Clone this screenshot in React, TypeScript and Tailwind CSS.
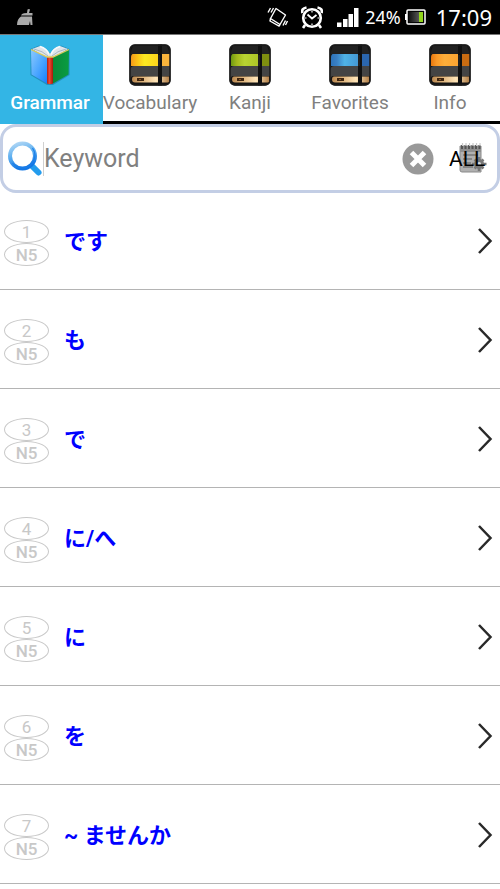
import { useState } from "react";

const tabs = [
  { label: "Grammar" },
  { label: "Vocabulary", id: "yellow", left: "#f59a1c", main: "#fdea22", end: "#fbc016", right: "#f9b43c" },
  { label: "Kanji", id: "green", left: "#6f9a12", main: "#b9d432", end: "#a3b81c", right: "#7f8f10" },
  { label: "Favorites", id: "blue", left: "#2d74bb", main: "#4fb3e6", end: "#3a80c4", right: "#2b66ae" },
  { label: "Info", id: "orange", left: "#e8780f", main: "#fdae3a", end: "#fa9a28", right: "#c96c12" },
];

const entries = ["です", "も", "で", "に/へ", "に", "を", "~ ませんか"];

function OpenBook() {
  return (
    <svg viewBox="0 0 42 42" className="h-[42px] w-[42px]" aria-hidden="true">
      <defs>
        <linearGradient id="cover-blue" x1="0" y1="0" x2="1" y2="1">
          <stop offset="0" stopColor="#8cc9fd" />
          <stop offset="0.5" stopColor="#4fa8ff" />
          <stop offset="1" stopColor="#1480ff" />
        </linearGradient>
        <linearGradient id="cover-green" x1="0" y1="0" x2="1" y2="0">
          <stop offset="0" stopColor="#0a8a37" />
          <stop offset="1" stopColor="#0a9c42" />
        </linearGradient>
        <linearGradient id="spine" x1="0" y1="0" x2="1" y2="0">
          <stop offset="0" stopColor="#b51f10" />
          <stop offset="0.4" stopColor="#ee4a34" />
          <stop offset="1" stopColor="#a91808" />
        </linearGradient>
      </defs>
      <path d="M1.5 5 10 1.500l11 8 11-8L40.500 5v26L24 41h-6L1.500 31Z" fill="#126a94" opacity=".5" />
      <path d="M3 5 11 2q7 2 10 8 3-6 10-8l8 3-15 9h-6Z" fill="#dfe4ea" />
      <path d="M11 2.500q7 2 9 8M31 2.500q-7 2-9 8" stroke="#f8f9fb" strokeWidth="1.500" fill="none" />
      <path d="M5 5q9 2 14 7M37 5q-9 2-14 7" stroke="#a9b7c6" fill="none" />
      <path d="M2 5.500 18 13v26.500L2.500 30.500Z" fill="url(#cover-blue)" />
      <path d="M40 5.500 24 13v26.500l15.500-9Z" fill="url(#cover-green)" />
      <path d="M18 13h6v26.500q-3 1.500-6 0Z" fill="url(#spine)" />
      <path d="m2 5.500 16 7.500h6l16-7.500" fill="none" stroke="#dccb59" strokeWidth="1.300" />
    </svg>
  );
}

function Notebook({ id, left, main, end, right }: { id: string; left: string; main: string; end: string; right: string }) {
  return (
    <svg viewBox="0 0 42 42" className="h-[42px] w-[42px]" aria-hidden="true">
      <defs>
        <linearGradient id={`${id}-band`} x1="0" y1="0" x2="1" y2="0">
          <stop offset="0" stopColor={left} />
          <stop offset="0.15" stopColor={end} />
          <stop offset="0.35" stopColor={main} />
          <stop offset="1" stopColor={end} />
        </linearGradient>
        <linearGradient id={`${id}-pages`} x1="0" y1="0" x2="1" y2="0">
          <stop offset="0" stopColor="#b98750" />
          <stop offset="0.3" stopColor="#e0b67e" />
          <stop offset="0.65" stopColor="#ffe5b9" />
          <stop offset="1" stopColor="#b28049" />
        </linearGradient>
        <clipPath id={`${id}-clip`}>
          <rect x="0.500" y="0.500" width="41" height="41" rx="5" />
        </clipPath>
      </defs>
      <g clipPath={`url(#${id}-clip)`}>
        <rect width="42" height="42" fill="#141414" />
        <path d="M4 2h34l3 8H1Z" fill="#212121" />
        <path d="M4 10h37v12H2V14q0-4 2-4Z" fill={`url(#${id}-band)`} />
        <rect x="33" y="10" width="8" height="12" fill={right} />
        <path d="M5 22h36v10H4q-2 0-3 3V26q1-4 4-4Z" fill="#444" />
        <path d="M5 32.500h35v6H6q-3 0-3-3t2-3Z" fill={`url(#${id}-pages)`} />
        <path d="M8 34h7v3H8Z" fill="#3e2510" />
        <path d="M10 35.500h2" stroke="#8e5b28" />
        <path d="M29 0h4v42h-4Z" fill="#101010" />
        <path d="M30 11v11" stroke="#303030" />
      </g>
      <rect x="1" y="1" width="40" height="40" rx="5" fill="none" stroke="#1b1b1b" strokeWidth="1.500" />
    </svg>
  );
}

function StatusBar() {
  return (
    <div className="flex h-[35px] items-center border-b border-[#777] bg-black pl-[17px] pr-[8px] font-['Noto_Sans',sans-serif] text-white">
      <svg viewBox="0 0 17 18" className="h-[18px] w-[17px]" role="img" aria-label="Cleaner">
        <path d="M10.500 1.500Q12 .5 13 1.500L12 5h3.500v2.500H4Q4.500 5.500 7 5.300L10 5ZM4 8.500h11L15.500 17h-2L13 13l-1 4H0Q0 11 4 8.500Z" fill="#aaa" />
      </svg>
      <div className="ml-auto flex items-center">
        <svg viewBox="0 0 22 20" className="h-[20px] w-[22px]" role="img" aria-label="Vibrate" fill="none" stroke="#fff">
          <path d="M9 1.500 18.500 8l-5.500 9.500-9.500-6Z" strokeWidth="1.400" strokeLinejoin="round" />
          <path d="m3.500 11.500-.5 2.500 9 5 1-1.500" strokeWidth="1.400" />
          <path d="M6.500 1 4 5.500M3.500 1 1 5.500M18.500 18l2-4M16 18.500l2.500-5" strokeWidth="1.400" />
        </svg>
        <svg viewBox="1 1 22 23" className="ml-[12px] h-[23px] w-[22px]" role="img" aria-label="Alarm" fill="none" stroke="#fff">
          <circle cx="12" cy="13" r="8.800" strokeWidth="2.600" />
          <path d="M7.500 9.500 12 13.500l4.500-3.500" strokeWidth="1.800" />
          <path d="M2.500 8Q1 3.500 6.500 2.500M21.500 8q1.500-4.500-4-5.500M5 20l-2 3M19 20l2 3" strokeWidth="2.600" />
          <path d="M12 6v1.500M12 18.500V20M5 13h1.500M17.500 13H19" strokeWidth="1.200" />
        </svg>
        <svg viewBox="0 0 22 19" className="ml-[14px] h-[19px] w-[22px]" role="img" aria-label="Signal" fill="#fff">
          <path d="M0 14.500h4.500V19H0ZM6 11h4.500v8H6ZM11.500 6H16v13h-4.500ZM17 0h4.500v19H17Z" />
        </svg>
        <span className="ml-[6px] text-[18px] leading-[24px]">24%</span>
        <svg viewBox="0 0 21 16" className="ml-[4px] h-[16px] w-[21px]" role="img" aria-label="Battery">
          <defs>
            <linearGradient id="battery" x1="0" x2="1" y1="0" y2="0">
              <stop stopColor="#111" />
              <stop offset="1" stopColor="#555" />
            </linearGradient>
          </defs>
          <path d="M0 5h2v6H0Z" fill="#fff" />
          <rect x="2" y="1" width="18" height="14" rx="1" stroke="#fff" strokeWidth="1.500" fill="#050505" />
          <rect x="4" y="3" width="10" height="10" fill="url(#battery)" />
          <rect x="14" y="3" width="4" height="10" fill="#91d51b" />
        </svg>
        <span className="ml-[10px] text-[22px] leading-[32px]">17:09</span>
      </div>
    </div>
  );
}

function SearchBox() {
  const [keyword, setKeyword] = useState("");
  return (
    <form className="flex h-[69px] items-center rounded-[16px] border-[3px] border-[#c3cee5] pl-[4px] pr-[9px]" onSubmit={(e) => e.preventDefault()}>
      <svg viewBox="0 0 36 36" className="h-[36px] w-[36px] shrink-0" aria-hidden="true">
        <defs>
          <linearGradient id="lens" x1="0" y1="0" x2="0.300" y2="1">
            <stop stopColor="#b5d9f5" />
            <stop offset="0.500" stopColor="#5fb0f0" />
            <stop offset="1" stopColor="#1477e5" />
          </linearGradient>
        </defs>
        <path d="m25 25 6.500 6.500" stroke="#239ced" strokeWidth="6" strokeLinecap="round" />
        <circle cx="15.500" cy="15" r="12.500" fill="#fff" stroke="url(#lens)" strokeWidth="4" />
        <path d="M25.500 7q5 7 0 15-4 5-10 5-6 0-10-5" fill="none" stroke="#1b7ee9" strokeWidth="1.200" />
      </svg>
      <input
        type="text"
        aria-label="Keyword"
        placeholder="Keyword"
        value={keyword}
        onChange={(e) => setKeyword(e.target.value)}
        className="h-[34px] min-w-0 flex-1 border-l border-[#d0d0d0] bg-transparent text-[25px] leading-[34px] outline-none placeholder:text-[#808080]"
      />
      <button type="button" aria-label="Clear" onClick={() => setKeyword("")} className="shrink-0">
        <svg viewBox="0 0 32 32" className="h-[32px] w-[32px]" aria-hidden="true">
          <circle cx="16" cy="16" r="15.500" fill="#999" />
          <path d="m9.500 9.500 13 13m0-13-13 13" stroke="#fff" strokeWidth="5" />
        </svg>
      </button>
      <button type="button" className="relative ml-[15px] flex h-[36px] w-[39px] shrink-0 items-center text-[21px] leading-[28px]">
        <svg viewBox="0 0 30 32" className="absolute right-0 top-[1px] h-[32px] w-[30px]" aria-hidden="true">
          <path d="M2 4h21v26H4q-2 0-2-2Z" fill="#b0b0b0" stroke="#8a8a8a" />
          <path d="M2 4h21v6H2Z" fill="#8f8f8f" />
          <path d="M4 7V3m3.500 4V3M11 7V3m3.500 4V3M18 7V3m3.500 4V3" stroke="#555" strokeWidth="2" />
          <path d="M4.500 4V1M8 4V1m3.500 3V1M15 4V1m3.500 3V1M22 4V1" stroke="#ccc" strokeWidth="1.200" />
          <path d="M5 13h15M5 17h9M5 21h8M5 25h10" stroke="#777" strokeWidth="1.500" />
          <path d="M21 15v14M14 22h14.500M16.500 17.500l9 9M25.500 17.500l-9 9" stroke="#777" strokeWidth="2.500" />
          <circle cx="21" cy="22" r="5" fill="#777" />
          <circle cx="21" cy="22" r="2" fill="#ddd" />
        </svg>
        <span className="relative text-black">ALL</span>
      </button>
    </form>
  );
}

export default function App() {
  const [selected, setSelected] = useState("Grammar");
  return (
    <div className="min-h-screen bg-white font-[Roboto,'Noto_Sans_CJK_JP',sans-serif]">
      <StatusBar />
      <nav className="grid h-[89px] grid-cols-5" aria-label="Sections">
        {tabs.map((tab) => (
          <button
            key={tab.label}
            type="button"
            aria-pressed={selected === tab.label}
            onClick={() => setSelected(tab.label)}
            className={
              selected === tab.label
                ? "relative z-10 -mr-[3px] flex flex-col items-center bg-[#33b5e5] pr-[3px] pt-[9px] text-white"
                : "flex min-w-0 flex-col items-center border-b-[3px] border-black pt-[9px] text-[#808080]"
            }
          >
            {tab.id ? <Notebook id={tab.id} left={tab.left!} main={tab.main!} end={tab.end!} right={tab.right!} /> : <OpenBook />}
            <span className={selected === tab.label ? "mt-[4px] text-[19px] font-medium leading-[26px]" : "mt-[4px] text-[19px] leading-[26px]"}>{tab.label}</span>
          </button>
        ))}
      </nav>
      <SearchBox />
      <ul className="-mt-[2px]">
        {entries.map((entry, i) => (
          <li key={entry} className="border-b border-[#b4b4b4]">
            <button type="button" className="flex h-[98px] w-full items-center pl-[4px] pr-[7px] pt-[2px] text-left">
              <span className="mt-[4px] flex w-[45px] shrink-0 flex-col text-center text-[17px] leading-[20px] text-[#c8c8c8]">
                <span className="h-[23px] rounded-[50%] border border-[#c8c8c8] pt-[1px]">{i + 1}</span>
                <span className="h-[23px] rounded-[50%] border border-[#c8c8c8] pt-[1px] font-medium">N5</span>
              </span>
              <span className="ml-[15px] mt-[2px] flex-1 text-[22px] font-bold leading-[32px] text-[#0000ff]">{entry}</span>
              <svg viewBox="0 0 16 28" className="h-[28px] w-[16px]" aria-hidden="true" fill="none" stroke="#292929" strokeWidth="2.500">
                <path d="m2 2 11.500 12L2 26" />
              </svg>
            </button>
          </li>
        ))}
      </ul>
    </div>
  );
}
